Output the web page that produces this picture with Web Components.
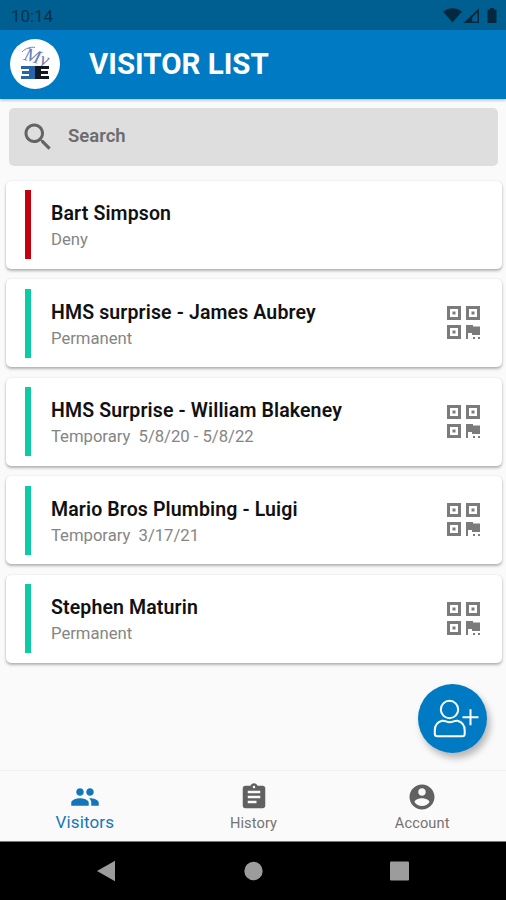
<!DOCTYPE html>
<html lang="en">
<head>
<meta charset="utf-8">
<meta name="viewport" content="width=device-width, initial-scale=1">
<title>Visitor List</title>
<style>
  html, body { height: 100%; }
  body {
    margin: 0;
    overflow: hidden;
    font-family: Roboto, 'Noto Sans', sans-serif;
    --brand: #007bc3;
    --brand-dark: #005f91;
    --muted: #858585;
  }
</style>
</head>
<body>
<visitors-app></visitors-app>

<script>
/** Shared base: puts the markup of the class in an open shadow root. */
class BaseElement extends HTMLElement {
  connectedCallback() {
    if (!this.shadowRoot) {
      this.attachShadow({ mode: 'open' });
      this.shadowRoot.innerHTML = this.template();
    }
  }
}

/** <status-bar> - slot: the time */
class StatusBar extends BaseElement {
  template() {
    return `
      <style>
        :host {
          display: flex;
          align-items: center;
          justify-content: space-between;
          box-sizing: border-box;
          height: 30px;
          padding: 2px 7px 0 11px;
          background: var(--brand-dark);
          color: #04324c;
          font-size: 17px;
          letter-spacing: -0.1px;
        }
        svg { display: block; fill: #04283d; }
      </style>
      <span><slot></slot></span>
      <svg width="56" height="17" viewBox="0 0 56 17">
        <path d="M0 3.500C6-1 13-1 19 3.500L9.500 14.500z"/>
        <path fill-rule="evenodd" d="M36 .3V15H20.500zM34.500 4.200l-5.300 5.300v4h5.300z"/>
        <path d="M47 0h4v1.500h2.500V15h-9V1.500H47z"/>
      </svg>
    `;
  }
}
customElements.define('status-bar', StatusBar);

/** <brand-logo> - round badge with the company mark */
class BrandLogo extends BaseElement {
  template() {
    return `
      <style>
        :host {
          display: block;
          width: 50px;
          height: 50px;
          border-radius: 50%;
          background: #fff;
        }
        svg { display: block; }
        text { font: italic 19px 'Liberation Serif', serif; fill: #6580b5; }
      </style>
      <svg width="50" height="50" viewBox="0 0 50 50">
        <path d="M12 13c3-3.500 9-5.500 13-4.500" fill="none" stroke="#6785b8" stroke-width="1"/>
        <text x="13" y="20.500" textLength="25" lengthAdjust="spacingAndGlyphs" transform="rotate(16 13 20.500)">My</text>
        <path fill="#2665a9" d="M11 27h14v13H11v-3h8v-2h-7v-3h7v-2h-8z"/>
        <path fill="#111a24" d="M25 27h14v3h-8v2h7v3h-7v2h8v3H25z"/>
      </svg>
    `;
  }
}
customElements.define('brand-logo', BrandLogo);

/** <app-bar> - slot: title */
class AppBar extends BaseElement {
  template() {
    return `
      <style>
        :host {
          display: flex;
          align-items: center;
          gap: 29px;
          box-sizing: border-box;
          height: 69px;
          padding: 0 0 1px 10px;
          background: var(--brand);
          color: #fff;
          box-shadow: 0 1px 3px rgba(0,0,0,0.3);
        }
        h1 { margin: 0; font-size: 29.500px; font-weight: 700; line-height: 36px; white-space: nowrap; }
      </style>
      <brand-logo></brand-logo>
      <h1><slot></slot></h1>
    `;
  }
}
customElements.define('app-bar', AppBar);

/** <search-box> - slot: placeholder */
class SearchBox extends BaseElement {
  template() {
    return `
      <style>
        :host {
          display: flex;
          align-items: center;
          gap: 12px;
          box-sizing: border-box;
          height: 58px;
          margin: 9px 8px 0 9px;
          padding-left: 11px;
          border-radius: 5px;
          background: #dedede;
          color: #6c6c6c;
          font-size: 18.500px;
          font-weight: 600;
        }
        svg { fill: #646464; }
        span { padding-bottom: 2px; }
      </style>
      <svg width="36" height="36" viewBox="0 0 24 24">
        <path d="M15.500 14h-.79l-.28-.27C15.410 12.590 16 11.110 16 9.500 16 5.910 13.090 3 9.500 3S3 5.910 3 9.500 5.910 16 9.500 16c1.610 0 3.090-.59 4.230-1.570l.27.28v.79l5 4.990L20.490 19l-4.990-5zm-6 0C7.010 14 5 11.990 5 9.500S7.010 5 9.500 5 14 7.010 14 9.500 11.990 14 9.500 14z"/>
      </svg>
      <span><slot></slot></span>
    `;
  }
}
customElements.define('search-box', SearchBox);

/**
 * <visitor-card>
 * Attributes: denied (red stripe), code (shows the QR icon)
 * Slots: default (name), status
 */
class VisitorCard extends BaseElement {
  template() {
    const qr = `
      <svg width="33" height="34" viewBox="0 0 33 34">
        <path fill-rule="evenodd" d="M0 0h14v14H0zM3 3v8h8V3zM19 0h14v14H19zM22 3v8h8V3zM0 19h14v14H0zM3 22v8h8v-8z"/>
        <path d="M5.500 5.500h3v3h-3zM24.500 5.500h3v3h-3zM5.500 24.500h3v3h-3zM19 19h7v1.500h7V29h-8v-2h-4v6h-2zM26 31h2v2h-2zM31 31h2v2h-2z"/>
      </svg>`;
    return `
      <style>
        :host {
          display: flex;
          align-items: center;
          box-sizing: border-box;
          height: 88px;
          padding: 0 22px 0 19px;
          border-radius: 5px;
          background: #fff;
          box-shadow: 0 2px 3px rgba(0,0,0,0.28), 0 0 2px rgba(0,0,0,0.1);
        }
        .stripe { width: 6px; height: 69px; background: #0dcba4; }
        :host([denied]) .stripe { background: #c5000f; }
        .text { flex: 1; padding: 4px 0 0 20px; }
        .name { color: #111; font-size: 19.500px; font-weight: 600; line-height: 24px; letter-spacing: 0.13px; }
        .status { margin-top: 3px; color: var(--muted); font-size: 16.700px; line-height: 22px; letter-spacing: -0.03px; white-space: pre; }
        svg { fill: #7b7b7b; }
      </style>
      <div class="stripe"></div>
      <div class="text">
        <div class="name"><slot></slot></div>
        <div class="status"><slot name="status"></slot></div>
      </div>
      ${this.hasAttribute('code') ? qr : ''}
    `;
  }
}
customElements.define('visitor-card', VisitorCard);

/** <add-button> - floating action button */
class AddButton extends BaseElement {
  template() {
    return `
      <style>
        :host {
          display: block;
          width: 69px;
          height: 69px;
          border-radius: 50%;
          background: var(--brand);
          box-shadow: 3px 5px 7px rgba(0,0,0,0.28);
        }
        svg { display: block; fill: none; stroke: #fff; stroke-width: 2; }
      </style>
      <svg width="69" height="69" viewBox="0 0 69 69">
        <circle cx="31.500" cy="25.500" r="8.700"/>
        <path d="M24 36.800c-4.500 1.200-7.200 4.700-7.200 9.700v3.200c0 1.500 1 2.500 2.500 2.500h24.900c1.500 0 2.500-1 2.500-2.500v-3.200c0-5-2.700-8.500-7.200-9.700-2.500-.6-4.500 1.400-7.700 1.400S26.500 36.200 24 36.800z"/>
        <path d="M44.500 33.200h16M52.500 25.200v16"/>
      </svg>
    `;
  }
}
customElements.define('add-button', AddButton);

const TAB_ICONS = {
  people: 'M16 11c1.660 0 2.990-1.340 2.990-3S17.660 5 16 5s-3 1.340-3 3 1.340 3 3 3zm-8 0c1.660 0 2.990-1.340 2.990-3S9.660 5 8 5 5 6.340 5 8s1.340 3 3 3zm0 2c-2.330 0-7 1.170-7 3.500V19h14v-2.500c0-2.330-4.670-3.500-7-3.500zm8 0c-.29 0-.62.020-.97.050 1.160.84 1.970 1.970 1.970 3.450V19h6v-2.500c0-2.330-4.670-3.500-7-3.500z',
  assignment: 'M19 3h-4.180C14.400 1.840 13.300 1 12 1s-2.400.84-2.820 2H5c-1.100 0-2 .9-2 2v14c0 1.100.9 2 2 2h14c1.100 0 2-.9 2-2V5c0-1.100-.9-2-2-2zm-7 0c.55 0 1 .45 1 1s-.45 1-1 1-1-.45-1-1 .45-1 1-1zm2 14H7v-2h7v2zm3-4H7v-2h10v2zm0-4H7V7h10v2z',
  account: 'M12 2C6.480 2 2 6.480 2 12s4.480 10 10 10 10-4.480 10-10S17.520 2 12 2zm0 3c1.660 0 3 1.340 3 3s-1.340 3-3 3-3-1.340-3-3 1.340-3 3-3zm0 14.200c-2.500 0-4.710-1.280-6-3.220.03-1.990 4-3.080 6-3.080 1.990 0 5.970 1.090 6 3.080-1.290 1.940-3.500 3.220-6 3.220z'
};

/** <nav-tab> - attributes: icon, active */
class NavTab extends BaseElement {
  template() {
    return `
      <style>
        :host {
          display: flex;
          flex-direction: column;
          align-items: center;
          flex: 1;
          padding: 11px 0 0 1px;
          color: #737373;
          font-size: 14.600px;
          letter-spacing: 0.1px;
        }
        :host([active]) { color: #1476ba; font-size: 17px; letter-spacing: 0.15px; }
        svg { display: block; fill: #616161; }
        :host([active]) svg { fill: #1476ba; }
        span { line-height: 23px; }
        :host([active]) span { line-height: 21px; }
      </style>
      <svg width="30" height="30" viewBox="0 0 24 24"><path d="${TAB_ICONS[this.getAttribute('icon')]}"/></svg>
      <span><slot></slot></span>
    `;
  }
}
customElements.define('nav-tab', NavTab);

/** <system-nav> - back, home and recents */
class SystemNav extends BaseElement {
  template() {
    return `
      <style>
        :host {
          display: flex;
          justify-content: center;
          box-sizing: border-box;
          height: 59px;
          border-top: 1px solid #777;
          background: #000;
        }
        svg { fill: #9c9c9c; }
      </style>
      <svg width="506" height="58" viewBox="0 0 506 58">
        <path d="M97 29l18-10.300v20.600z"/>
        <circle cx="253.500" cy="29" r="9.200"/>
        <rect x="390" y="19.500" width="19" height="19" rx="1"/>
      </svg>
    `;
  }
}
customElements.define('system-nav', SystemNav);

/** <visitors-app> - the whole screen */
class VisitorsApp extends BaseElement {
  template() {
    return `
      <style>
        :host {
          display: flex;
          flex-direction: column;
          position: relative;
          height: 900px;
          width: 506px;
          background: #fafafa;
        }
        .list {
          display: flex;
          flex-direction: column;
          gap: 10.500px;
          flex: 1;
          padding: 14.500px 4px 0 6px;
        }
        nav {
          display: flex;
          box-sizing: border-box;
          height: 71px;
          border-top: 1px solid #f0f0f0;
          background: #fafafa;
        }
        /* floats over the end of the list */
        add-button { position: absolute; right: 19px; bottom: 147px; }
      </style>
      <status-bar>10:14</status-bar>
      <app-bar>VISITOR LIST</app-bar>
      <search-box>Search</search-box>
      <div class="list">
        <visitor-card denied>Bart Simpson<span slot="status">Deny</span></visitor-card>
        <visitor-card code>HMS surprise - James Aubrey<span slot="status">Permanent</span></visitor-card>
        <visitor-card code>HMS Surprise - William Blakeney<span slot="status">Temporary  5/8/20 - 5/8/22</span></visitor-card>
        <visitor-card code>Mario Bros Plumbing - Luigi<span slot="status">Temporary  3/17/21</span></visitor-card>
        <visitor-card code>Stephen Maturin<span slot="status">Permanent</span></visitor-card>
      </div>
      <add-button></add-button>
      <nav>
        <nav-tab icon="people" active>Visitors</nav-tab>
        <nav-tab icon="assignment">History</nav-tab>
        <nav-tab icon="account">Account</nav-tab>
      </nav>
      <system-nav></system-nav>
    `;
  }
}
customElements.define('visitors-app', VisitorsApp);
</script>
</body>
</html>
